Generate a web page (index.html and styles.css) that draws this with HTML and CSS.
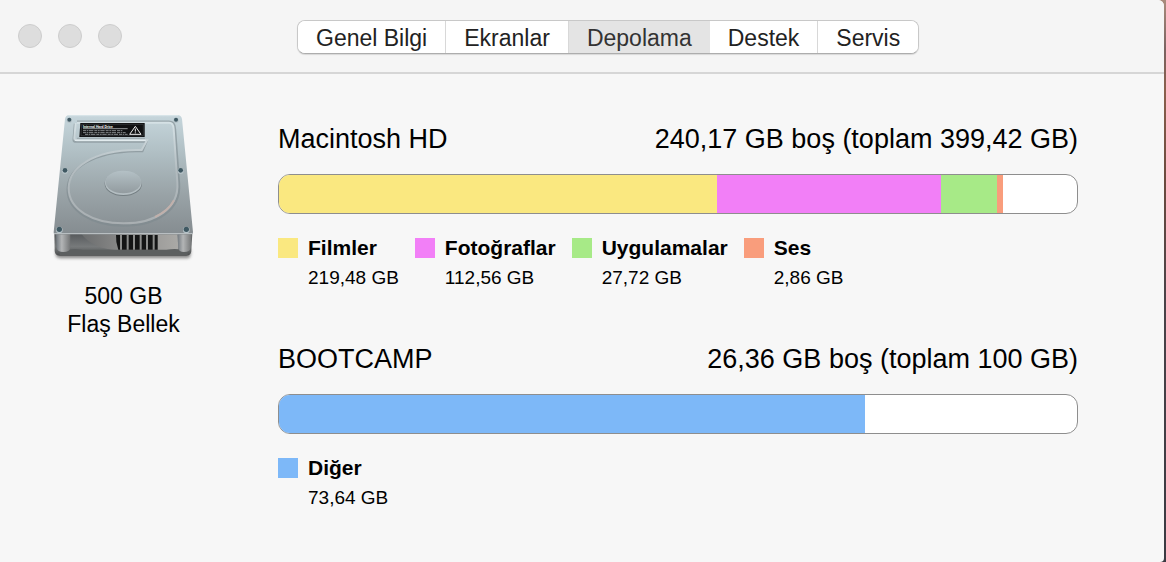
FILE: index.html
```html
<!DOCTYPE html>
<html lang="tr">
<head>
    <meta charset="UTF-8">
    <meta name="viewport" content="width=device-width, initial-scale=1.0">
    <title>Depolama</title>
    <link rel="stylesheet" href="styles.css">
</head>
<body>

<div class="window">
    <!-- Title bar -->
    <header class="titlebar">
        <div class="lights">
            <button type="button" class="light" aria-label="Kapat"></button>
            <button type="button" class="light" aria-label="Küçült"></button>
            <button type="button" class="light" aria-label="Büyüt"></button>
        </div>
        <nav class="tabs">
            <button type="button" class="tab">Genel Bilgi</button>
            <button type="button" class="tab">Ekranlar</button>
            <button type="button" class="tab active">Depolama</button>
            <button type="button" class="tab">Destek</button>
            <button type="button" class="tab">Servis</button>
        </nav>
    </header>

    <div class="content">
        <!-- Drive -->
        <aside class="drive">
            <svg class="drive-icon" viewBox="-2 0 510 495" aria-hidden="true">
                <defs>
                    <linearGradient id="plate" x1="0" y1="0" x2="0" y2="1">
                        <stop offset="0" stop-color="#c6d6dc"/>
                        <stop offset="0.3" stop-color="#b1c0c5"/>
                        <stop offset="0.65" stop-color="#9aa4a8"/>
                        <stop offset="1" stop-color="#858c90"/>
                    </linearGradient>
                    <linearGradient id="hub" x1="0" y1="0" x2="0" y2="1">
                        <stop offset="0" stop-color="#b4c1c6"/>
                        <stop offset="1" stop-color="#929b9f"/>
                    </linearGradient>
                    <linearGradient id="base" x1="0" y1="0" x2="0" y2="1">
                        <stop offset="0" stop-color="#55585a"/>
                        <stop offset="0.6" stop-color="#777a7b"/>
                        <stop offset="1" stop-color="#4b4d4e"/>
                    </linearGradient>
                    <linearGradient id="post" x1="0" y1="0" x2="1" y2="0">
                        <stop offset="0" stop-color="#70777d"/>
                        <stop offset="0.4" stop-color="#b3b5b6"/>
                        <stop offset="1" stop-color="#737576"/>
                    </linearGradient>
                    <linearGradient id="drum" x1="0" y1="0" x2="1" y2="0">
                        <stop offset="0" stop-color="#6b6d6e"/>
                        <stop offset="0.5" stop-color="#8f8f8e"/>
                        <stop offset="1" stop-color="#aaa9a6"/>
                    </linearGradient>
                    <linearGradient id="rim" x1="0" y1="0" x2="0" y2="1">
                        <stop offset="0" stop-color="#d5e1e5"/>
                        <stop offset="0.5" stop-color="#b2bbbf"/>
                        <stop offset="1" stop-color="#a9afb2"/>
                    </linearGradient>
                    <filter id="soft" x="-10%" y="-50%" width="120%" height="200%">
                        <feGaussianBlur stdDeviation="5"/>
                    </filter>
                </defs>

                <!-- shadow and base -->
                <path d="M48 434H454L452 454Q450 460 438 460H64Q50 460 48 450Z" fill="#444" opacity="0.6" filter="url(#soft)"/>
                <path d="M44 384H458L455 438Q454 452 440 452H60Q46 452 45 438Z" fill="url(#base)"/>
                <path d="M126 388H416V436H236Q160 432 126 388Z" fill="url(#drum)"/>
                <path d="M60 440Q90 428 130 434H380Q420 428 444 440V450H60Z" fill="#5c5f60"/>
                <path d="M49 388H92V428Q90 441 71 441Q53 441 51 428Z" fill="url(#post)"/>
                <path d="M413 388H456L453 428Q451 441 433 441Q417 441 416 428Z" fill="url(#post)"/>
                <path d="M229 390H354V434H236Q228 412 229 390Z" fill="#141515"/>
                <path d="M244 390V434M264 390V434M283 390V434M303 390V434M322 390V434M342 390V434" stroke="#8d8e8c" stroke-width="6"/>

                <!-- top plate -->
                <path d="M76 42Q78 30 90 30H412Q425 30 427 42L460 382Q460 388 454 388H47Q41 388 42 382Z" fill="url(#plate)"/>
                <path d="M43 386H459" stroke="#c2c8ca" stroke-width="3"/>
                <path d="M86 32H416" stroke="#dbe6ea" stroke-width="3"/>

                <!-- raised track round the disk -->
                <path d="M106 56L102 104Q102 110 110 110H320L308 138H290C160 140 84 190 84 254C84 318 160 362 252 362C350 362 424 316 418 236L406 72Q405 50 388 50H112" fill="none" stroke="#7d888d" stroke-width="7" opacity="0.6"/>
                <path d="M108 54L104 100Q104 106 112 106H322L306 135H290C160 136 87 188 87 250C87 314 160 355 252 355C348 355 419 310 413 232L402 72Q401 53 388 53H112" fill="none" stroke="url(#rim)" stroke-width="6"/>
                <path d="M106 106H318" stroke="#e2ebee" stroke-width="4"/>
                <path d="M112 100H316" stroke="#8e9a9f" stroke-width="2"/>
                <path d="M346 336Q386 318 403 286" fill="none" stroke="#c1b0ab" stroke-width="6"/>

                <!-- hub -->
                <ellipse cx="251" cy="237" rx="56" ry="36" fill="#747e82"/>
                <ellipse cx="251" cy="234" rx="55" ry="36" fill="#b4bec2"/>
                <ellipse cx="251" cy="231" rx="53" ry="34" fill="url(#hub)"/>

                <!-- label -->
                <path d="M122 54H315V96H119Z" fill="#101112"/>
                <path d="M126 58H311V92H124Z" fill="none" stroke="#6d7072" stroke-width="1"/>
                <text class="sticker" x="130" y="68">Internal Hard Drive</text>
                <path d="M130 71H264" stroke="#d8dbdc" stroke-width="2"/>
                <path d="M130 77H248M130 83H258M136 88H264" stroke="#85898b" stroke-width="3" stroke-dasharray="9 2 5 2 13 3"/>
                <path d="M287 64L304 88H270Z" fill="none" stroke="#eee" stroke-width="3" stroke-linejoin="round"/>
                <path d="M287 71V80M287 82V85" stroke="#eee" stroke-width="3"/>

                <!-- screws -->
                <g fill="#b5c2c7">
                    <circle cx="89" cy="46" r="8"/>
                    <circle cx="409" cy="46" r="8"/>
                    <circle cx="76" cy="198" r="9"/>
                    <circle cx="423" cy="198" r="9"/>
                    <circle cx="59" cy="375" r="10"/>
                    <circle cx="440" cy="375" r="10"/>
                </g>
                <g fill="#3f5862">
                    <circle cx="89" cy="44" r="6"/>
                    <circle cx="409" cy="44" r="6"/>
                    <circle cx="76" cy="196" r="7"/>
                    <circle cx="423" cy="196" r="7"/>
                    <circle cx="59" cy="373" r="8"/>
                    <circle cx="440" cy="373" r="8"/>
                </g>
            </svg>
            <p>500 GB<br>Flaş Bellek</p>
        </aside>

        <!-- Volumes -->
        <main class="volumes">
            <section class="volume">
                <div class="volume-head">
                    <h2>Macintosh HD</h2>
                    <span>240,17 GB boş (toplam 399,42 GB)</span>
                </div>
                <div class="bar">
                    <div class="films" style="width: 54.9%"></div>
                    <div class="photos" style="width: 28.1%"></div>
                    <div class="apps" style="width: 7%"></div>
                    <div class="audio" style="width: 0.75%"></div>
                </div>
                <ul class="legend">
                    <li><i class="swatch films"></i><div><b>Filmler</b><span>219,48 GB</span></div></li>
                    <li><i class="swatch photos"></i><div><b>Fotoğraflar</b><span>112,56 GB</span></div></li>
                    <li><i class="swatch apps"></i><div><b>Uygulamalar</b><span>27,72 GB</span></div></li>
                    <li><i class="swatch audio"></i><div><b>Ses</b><span>2,86 GB</span></div></li>
                </ul>
            </section>

            <section class="volume">
                <div class="volume-head">
                    <h2>BOOTCAMP</h2>
                    <span>26,36 GB boş (toplam 100 GB)</span>
                </div>
                <div class="bar">
                    <div class="other" style="width: 73.4%"></div>
                </div>
                <ul class="legend">
                    <li><i class="swatch other"></i><div><b>Diğer</b><span>73,64 GB</span></div></li>
                </ul>
            </section>
        </main>
    </div>
</div>

</body>
</html>
```
FILE: styles.css
```css
* {
    box-sizing: border-box;
}

/* Desktop behind the window */
body {
    margin: 0;
    padding-right: 2px;
    background: linear-gradient(to bottom, #a98b7c 0, #7a6260 50px, #8a5f4c 90px, #6b4a3e 180px, #4a4248 300px, #3a3a42 100%);
    font-family: "Helvetica Neue", "Liberation Sans", Arial, sans-serif;
    color: #000;
}

.window {
    min-height: 100vh;
    background: #f7f7f7;
    border-radius: 0 6px 4px 0;
    overflow: hidden;
}

/* Title bar */
.titlebar {
    display: flex;
    align-items: flex-start;
    padding: 20px 18px 18px;
    background: #f5f5f5;
    border-bottom: 2px solid #d6d6d6;
}

.lights {
    display: flex;
    gap: 16px;
    padding-top: 4px;
}

.light {
    width: 24px;
    height: 24px;
    padding: 0;
    border: 1px solid #cdcdcd;
    border-radius: 50%;
    background: #dddddd;
}

.tabs {
    display: flex;
    margin-left: 175px;
    border: 1px solid #c8c8c8;
    border-bottom-color: #adadad;
    border-radius: 8px;
    background: #fff;
    box-shadow: 0 1px 1px rgba(0, 0, 0, 0.12);
    overflow: hidden;
}

.tab {
    height: 32px;
    padding: 2px 18px 0;
    border: none;
    background: #fff;
    font-family: inherit;
    font-size: 23px;
    line-height: 30px;
    color: #222;
}

.tab + .tab {
    border-left: 1px solid #d8d8d8;
}

.tab.active {
    background: #e4e4e4;
    color: #333;
}

.tab.active + .tab {
    border-left: none;
}

/* Content */
.content {
    display: flex;
    padding: 31px 86px 0 0;
}

.drive {
    width: 247px;
    text-align: center;
}

.drive-icon {
    display: block;
    width: 170px;
    height: 165px;
    margin: 0 auto;
}

.sticker {
    font-size: 10px;
    font-weight: bold;
    fill: #fff;
}

.drive p {
    margin: 12px 0 0;
    font-size: 23px;
    line-height: 28px;
}

.volumes {
    flex: 1;
    margin-left: 31px;
    padding-top: 18px;
}

.volume + .volume {
    margin-top: 50px;
}

.volume-head {
    display: flex;
    justify-content: space-between;
    font-size: 27px;
    line-height: 32px;
}

.volume-head h2 {
    margin: 0;
    font-size: 27px;
    font-weight: normal;
}

.bar {
    display: flex;
    height: 40px;
    margin-top: 19px;
    border: 1px solid #8e8e8e;
    border-radius: 12px;
    background: #fff;
    overflow: hidden;
}

.legend {
    display: flex;
    gap: 16px;
    margin: 19px 0 0;
    padding: 0;
    list-style: none;
}

.legend li {
    display: flex;
    gap: 10px;
}

.legend b,
.legend span {
    display: block;
}

.legend b {
    font-size: 21px;
    line-height: 30px;
}

.legend span {
    font-size: 19px;
    line-height: 30px;
}

.swatch {
    width: 20px;
    height: 20px;
    margin-top: 5px;
}

/* Category colours */
.films {
    background: #fae880;
}

.photos {
    background: #f27ff7;
}

.apps {
    background: #a7ea87;
}

.audio {
    background: #f99d7c;
}

.other {
    background: #7db8f8;
}
```
